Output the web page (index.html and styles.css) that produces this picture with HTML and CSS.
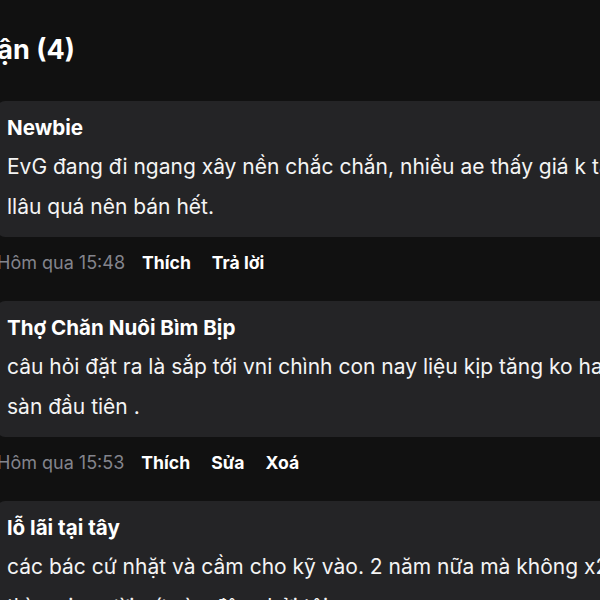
FILE: index.html
```html
<!DOCTYPE html>
<html lang="vi">
<head>
<meta charset="utf-8">
<title>Bình luận</title>
<link rel="stylesheet" href="styles.css">
</head>
<body>
<div class="page">
    <h2 class="title">Bình luận (4)</h2>

    <div class="comment">
        <div class="bubble">
            <div class="author">Newbie</div>
            <div class="text">EvG đang đi ngang xây nền chắc chắn, nhiều ae thấy giá k tăng<br>llâu quá nên bán hết.</div>
        </div>
        <div class="meta">
            <span class="time">Hôm qua 15:48</span>
            <a class="action">Thích</a>
            <a class="action">Trả lời</a>
        </div>
    </div>

    <div class="comment">
        <div class="bubble">
            <div class="author">Thợ Chăn Nuôi Bìm Bịp</div>
            <div class="text">câu hỏi đặt ra là sắp tới vni chình con nay liệu kịp tăng ko hay<br>sàn đầu tiên .</div>
        </div>
        <div class="meta">
            <span class="time">Hôm qua 15:53</span>
            <a class="action">Thích</a>
            <a class="action">Sửa</a>
            <a class="action">Xoá</a>
        </div>
    </div>

    <div class="comment">
        <div class="bubble">
            <div class="author">lỗ lãi tại tây</div>
            <div class="text">các bác cứ nhặt và cầm cho kỹ vào. 2 năm nữa mà không x2<br>thì mọi người cứ vào đây chửi tôi.</div>
        </div>
    </div>
</div>
</body>
</html>
```

FILE: styles.css
```css
html, body {
    overflow: hidden;
}

body {
    margin: 0;
    padding: 0;
    background: #111111;
    color: #f2f2f2;
    font-family: Inter, "Noto Sans", sans-serif;
}

.page {
    margin-left: -3px;
    width: 760px;
    padding-top: 34px;
}

.title {
    margin: 0 0 35px -89px;
    font-size: 27px;
    line-height: 32px;
    font-weight: 700;
    color: #ffffff;
}

.comment {
    margin-bottom: 14px;
}

.bubble {
    background: #242426;
    border-radius: 8px;
    padding: 8px 10px 10px 10px;
}

.author {
    font-weight: 700;
    font-size: 20.6px;
    line-height: 38px;
    color: #ffffff;
}

.text {
    font-size: 21px;
    line-height: 40px;
    color: #f4f4f4;
    white-space: nowrap;
}

.meta {
    display: flex;
    align-items: center;
    height: 50px;
    font-size: 18px;
}

.time {
    color: #83848c;
    margin-right: 17px;
}

.action {
    color: #ffffff;
    font-weight: 700;
    font-size: 17.6px;
    margin-right: 21px;
    cursor: pointer;
}
```
